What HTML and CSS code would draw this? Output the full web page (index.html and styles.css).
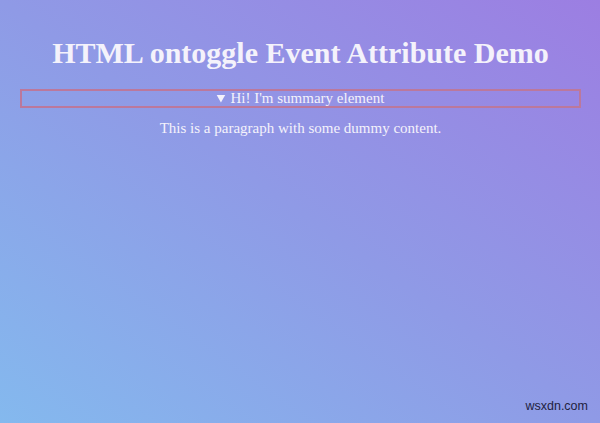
FILE: index.html
```html
<!DOCTYPE html>
<html>
<head>
<meta charset="utf-8">
<link rel="stylesheet" href="styles.css">
</head>
<body>
<main class="page">
  <h1 class="title">HTML ontoggle Event Attribute Demo</h1>
  <details class="box" open>
    <summary class="summary">Hi! I'm summary element</summary>
    <p class="content">This is a paragraph with some dummy content.</p>
  </details>
  <div class="mark">wsxdn.com</div>
</main>
</body>
</html>
```

FILE: styles.css
```css
html, body {
  margin: 0;
  padding: 0;
  height: 100%;
}
body {
  background: linear-gradient(to top right, #84b9ee 0%, #8f9ae6 50%, #9c7ee2 100%);
  font-family: "Liberation Serif", "Times New Roman", serif;
  color: #f4f2fb;
}
.page {
  position: relative;
  height: 423px;
  padding: 36px 19px 0 20px;
  box-sizing: border-box;
  text-align: center;
}
.title {
  margin: 0 0 19px;
  font-size: 30px;
  line-height: 34px;
  font-weight: bold;
}
.box {
  margin: 0;
}
.summary {
  border: 2px solid #bb789c;
  font-size: 15px;
  line-height: 15px;
  cursor: pointer;
}
.summary::marker {
  font-size: 13px;
}
.content {
  margin: 11px 0 0;
  font-size: 15px;
  line-height: 18px;
}
.mark {
  position: absolute;
  right: 12px;
  bottom: 10px;
  font-family: "Liberation Sans", Arial, sans-serif;
  font-size: 12.5px;
  color: #22223e;
}
```
